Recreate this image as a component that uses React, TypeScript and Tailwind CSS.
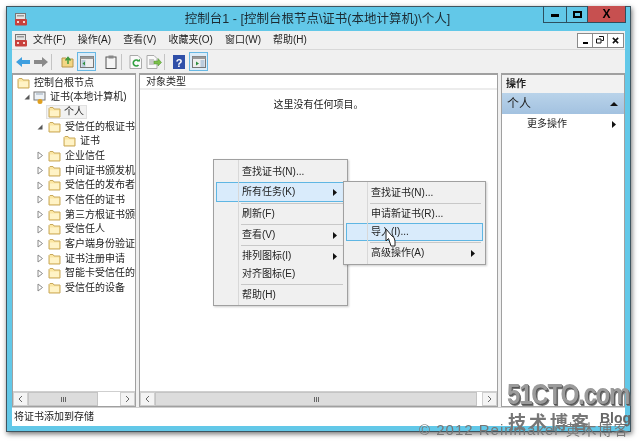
import React from 'react'

const cjk = '[font-family:"Liberation_Sans","Noto_Sans_CJK_SC",sans-serif]'

function Folder({ className = '' }: { className?: string }) {
  return (
    <svg viewBox="0 0 13 12" className={`w-[13px] h-[12px] shrink-0 ${className}`}>
      <path d="M1 2.5 L1 11 L12 11 L12 3 L6 3 L5 1.5 L2 1.5 Z" fill="#fbe6a2" stroke="#c9a95c" strokeWidth="1" />
      <path d="M2 4.5 H11 V10 H2 Z" fill="#fff3c6" />
    </svg>
  )
}

function Expander({ open }: { open?: boolean }) {
  return open ? (
    <svg viewBox="0 0 8 8" className="w-[8px] h-[8px] shrink-0">
      <path d="M6.5 1.5 V6.5 H1.5 Z" fill="#595959" />
    </svg>
  ) : (
    <svg viewBox="0 0 8 8" className="w-[8px] h-[9px] shrink-0">
      <path d="M2 .5 L6.5 4 L2 7.5 Z" fill="#fff" stroke="#8a8a8a" />
    </svg>
  )
}

function MenuArrow() {
  return (
    <svg viewBox="0 0 4 7" className="w-[4px] h-[7px] shrink-0">
      <path d="M0 0 L4 3.5 L0 7 Z" fill="#111" />
    </svg>
  )
}

const treeRows = [
  { label: '个人', pad: 'pl-[33px]', selected: true },
  { label: '受信任的根证书颁发机构', pad: 'pl-[23px]', open: true, arrow: true },
  { label: '证书', pad: 'pl-[50px]' },
  { label: '企业信任', pad: 'pl-[23px]', arrow: true },
  { label: '中间证书颁发机构', pad: 'pl-[23px]', arrow: true },
  { label: '受信任的发布者', pad: 'pl-[23px]', arrow: true },
  { label: '不信任的证书', pad: 'pl-[23px]', arrow: true },
  { label: '第三方根证书颁发机构', pad: 'pl-[23px]', arrow: true },
  { label: '受信任人', pad: 'pl-[23px]', arrow: true },
  { label: '客户端身份验证颁发者', pad: 'pl-[23px]', arrow: true },
  { label: '证书注册申请', pad: 'pl-[23px]', arrow: true },
  { label: '智能卡受信任的根', pad: 'pl-[23px]', arrow: true },
  { label: '受信任的设备', pad: 'pl-[23px]', arrow: true },
]

const menuNames = ['文件(F)', '操作(A)', '查看(V)', '收藏夹(O)', '窗口(W)', '帮助(H)']

function AppIcon() {
  return (
    <svg viewBox="0 0 14 14" className="w-[14px] h-[14px] shrink-0">
      <rect x="1.5" y="1.5" width="10" height="6" fill="#e4e4e4" stroke="#777" />
      <rect x="3" y="3" width="7" height="1.5" fill="#999" />
      <rect x="1" y="7" width="12" height="6.5" rx="1" fill="#c8403c" />
      <rect x="3" y="9" width="2" height="2" fill="#f5d5d0" />
      <rect x="9" y="9" width="2" height="2" fill="#f5d5d0" />
    </svg>
  )
}

function Scrollbar({ thumb }: { thumb: string }) {
  return (
    <div className="h-[15px] flex items-center bg-[#f0f0f0] border-t border-[#cfcfcf] shrink-0 text-[#555]">
      <div className="w-[15px] h-full flex items-center justify-center bg-[#f4f4f4] border border-[#cfcfcf]">
        <svg viewBox="0 0 5 8" className="w-[5px] h-[8px]"><path d="M4 1 L1 4 L4 7" fill="none" stroke="#666" /></svg>
      </div>
      <div className="flex-1 h-full flex bg-white">
        <div className={`${thumb} h-full bg-[#dcdcdc] border border-[#c4c4c4] flex items-center justify-center`}>
          <div className="flex gap-[1px]">
            <div className="w-[1px] h-[5px] bg-[#666]" />
            <div className="w-[1px] h-[5px] bg-[#666]" />
            <div className="w-[1px] h-[5px] bg-[#666]" />
          </div>
        </div>
      </div>
      <div className="w-[15px] h-full flex items-center justify-center bg-[#f4f4f4] border border-[#cfcfcf]">
        <svg viewBox="0 0 5 8" className="w-[5px] h-[8px]"><path d="M1 1 L4 4 L1 7" fill="none" stroke="#666" /></svg>
      </div>
    </div>
  )
}

function Sep({ left }: { left: string }) {
  return <div className={`h-[1px] bg-[#c8c8c8] ${left} mr-[2px] my-[1px]`} />
}

function MenuItem({ label, arrow, hot, height = 'h-[18px]', text = 'pl-[25px]' }: { label: string; arrow?: boolean; hot?: boolean; height?: string; text?: string }) {
  return (
    <div className={`${height} ${text} pr-[7px] flex items-center justify-between border ${hot ? 'bg-[#d9ebfb] border-[#5fb6e3]' : 'border-transparent'}`}>
      <span>{label}</span>
      {arrow && <MenuArrow />}
    </div>
  )
}

export default function App() {
  return (
    <div className={`w-[640px] h-[442px] bg-white pl-[6px] pt-[6px] relative overflow-hidden text-[10px] leading-none text-[#222] blur-[0.35px] ${cjk}`}>
      <div className="w-[625px] h-[426px] bg-[#62c8e8] border border-[#3f5560] shadow-[1px_2px_5px_rgba(0,0,0,0.55)] flex flex-col">
        {/* title bar */}
        <div className="h-[24px] flex items-start shrink-0 pl-[7px]">
          <div className="mt-[5px]"><AppIcon /></div>
          <div className="flex-1 text-center text-[12.5px] text-[#1c2b33] pt-[6px] pl-[64px] whitespace-nowrap">控制台1 - [控制台根节点\证书(本地计算机)\个人]</div>
          <div className="flex h-[17px] mr-[4px] -mt-[1px] border border-[#2d4f5f] border-t-0">
            <div className="w-[23px] flex items-center justify-center border-r border-[#2d4f5f]"><div className="w-[8px] h-[3px] bg-black mt-[3px]" /></div>
            <div className="w-[21px] flex items-center justify-center border-r border-[#2d4f5f]"><div className="w-[9px] h-[7px] border-2 border-black" /></div>
            <div className="w-[37px] flex items-center justify-center bg-[#c75050] text-[12px] font-bold text-black">X</div>
          </div>
        </div>

        <div className="flex-1 min-h-0 mx-[5px] flex flex-col bg-[#f0f0f0]">
          {/* menu bar */}
          <div className="h-[19px] flex items-center shrink-0 border-b border-[#d8d8d8] pl-[2px] pr-[1px]">
            <AppIcon />
            <div className="flex gap-[12px] ml-[5px] flex-1">
              {menuNames.map((name) => <span key={name}>{name}</span>)}
            </div>
            <div className="flex h-[15px] border border-[#8a8a8a] bg-white font-bold">
              <div className="w-[15px] flex items-end justify-center pb-[3px] border-r border-[#8a8a8a]"><div className="w-[5px] h-[2px] bg-black" /></div>
              <div className="w-[15px] flex items-center justify-center border-r border-[#8a8a8a]">
                <svg viewBox="0 0 8 8" className="w-[8px] h-[8px]"><path d="M3 .5 H7.5 V4.5 H5.5 M.5 3 H5 V7 H.5 Z" fill="none" stroke="#111" /></svg>
              </div>
              <div className="w-[15px] flex items-center justify-center">
                <svg viewBox="0 0 8 8" className="w-[7px] h-[7px]"><path d="M1 1 L7 7 M7 1 L1 7" stroke="#111" strokeWidth="1.8" /></svg>
              </div>
            </div>
          </div>

          {/* toolbar */}
          <div className="h-[23px] flex items-center shrink-0 pl-[4px]">
            <svg viewBox="0 0 14 12" className="w-[14px] h-[12px]"><path d="M0 6 L6 1 V4 H14 V8 H6 V11 Z" fill="#3f9fdf" /></svg>
            <svg viewBox="0 0 14 12" className="w-[14px] h-[12px] ml-[4px]"><path d="M14 6 L8 1 V4 H0 V8 H8 V11 Z" fill="#8a8a8a" /></svg>
            <div className="w-[1px] h-[16px] bg-[#c4c4c4] ml-[3px]" />
            <svg viewBox="0 0 13 13" className="w-[13px] h-[13px] ml-[9px]">
              <path d="M1 3 H5 L6 4 H12 V12 H1 Z" fill="#f3d684" stroke="#b8964a" />
              <path d="M7 9 V4 M4.5 5.5 L7 2.5 L9.5 5.5" fill="none" stroke="#3d9a3d" strokeWidth="1.5" />
            </svg>
            <div className="w-[19px] h-[19px] ml-[3px] bg-[#dcecf8] border border-[#68b8e4] flex items-center justify-center">
              <svg viewBox="0 0 14 12" className="w-[14px] h-[12px]"><rect x=".5" y=".5" width="13" height="11" fill="#eee" stroke="#777" /><rect x=".5" y=".5" width="13" height="2.5" fill="#999" /><rect x="1.5" y="4" width="4" height="7" fill="#bcd" /><path d="M5 5.5 L2.5 7.5 L5 9.5Z" fill="#2f8f3f" /></svg>
            </div>
            <svg viewBox="0 0 12 14" className="w-[12px] h-[14px] ml-[9px]"><rect x="1" y="2" width="10" height="11.5" fill="#f5f5f5" stroke="#555" /><rect x="3.5" y=".5" width="5" height="3" fill="#888" /></svg>
            <div className="w-[1px] h-[16px] bg-[#c4c4c4] ml-[4px]" />
            <svg viewBox="0 0 13 14" className="w-[13px] h-[14px] ml-[7px]"><path d="M1 .5 H9 L12.5 4 V13.5 H1 Z" fill="#fafafa" stroke="#aaa" /><path d="M9.5 6 A3 3 0 1 0 9.5 10" fill="none" stroke="#2f9f3f" strokeWidth="1.6" /><path d="M8 6.5 H11 V3.8 Z" fill="#2f9f3f" /></svg>
            <svg viewBox="0 0 16 14" className="w-[16px] h-[14px] ml-[4px]"><path d="M1 .5 H8 L11 3.5 V13.5 H1 Z" fill="#fafafa" stroke="#aaa" /><path d="M3 5 H8 M3 7 H8 M3 9 H8" stroke="#999" /><path d="M8 6 H12 V3.5 L15.5 7.5 L12 11 V9 H8 Z" fill="#7cc04a" stroke="#4d9030" strokeWidth=".5" /></svg>
            <div className="w-[1px] h-[16px] bg-[#c4c4c4] ml-[2px]" />
            <svg viewBox="0 0 12 14" className="w-[12px] h-[14px] ml-[8px]"><rect width="12" height="14" fill="#2f4fa8" /><text x="6" y="11.5" textAnchor="middle" fontSize="11" fontWeight="700" fill="#fff">?</text></svg>
            <div className="w-[19px] h-[19px] ml-[4px] bg-[#dcecf8] border border-[#68b8e4] flex items-center justify-center">
              <svg viewBox="0 0 14 12" className="w-[14px] h-[12px]"><rect x=".5" y=".5" width="13" height="11" fill="#eee" stroke="#777" /><rect x=".5" y=".5" width="13" height="2.5" fill="#999" /><rect x="8.5" y="4" width="4" height="7" fill="#bcd" /><path d="M4 5.5 L7 7.5 L4 9.5Z" fill="#2f8f3f" /></svg>
            </div>
          </div>

          {/* panes */}
          <div className="flex-1 min-h-0 flex gap-[3px]">
            <div className="w-[124px] bg-white border border-[#a0a0a0] border-t-2 flex flex-col overflow-hidden">
              <div className="flex-1 min-h-0 overflow-hidden whitespace-nowrap">
                <div className="h-[15px] flex items-center pl-[4px] gap-[4px]"><Folder /><span>控制台根节点</span></div>
                <div className="h-[14.67px] flex items-center pl-[10px]">
                  <Expander open />
                  <svg viewBox="0 0 13 13" className="w-[13px] h-[13px] ml-[2px] shrink-0"><rect x="1" y="1" width="11" height="8" fill="#eef2f6" stroke="#777" /><path d="M3 3 H10" stroke="#9ab" /><circle cx="7" cy="10.5" r="2.5" fill="#e0a020" /></svg>
                  <span className="ml-[4px]">证书(本地计算机)</span>
                </div>
                {treeRows.map((row) => (
                  <div key={row.label} className={`h-[14.67px] flex items-center ${row.pad}`}>
                    {row.arrow && <div className="w-[12px] flex shrink-0"><Expander open={row.open} /></div>}
                    <div className={row.selected ? 'flex items-center h-[14px] gap-[3px] pl-[1px] pr-[2px] bg-[#f2f2f2] border border-[#e0e0e0]' : 'flex items-center gap-[4px]'}>
                      <Folder />
                      <span>{row.label}</span>
                    </div>
                  </div>
                ))}
              </div>
              <Scrollbar thumb="w-[70px]" />
            </div>

            <div className="w-[359px] bg-white border border-[#a0a0a0] border-t-2 flex flex-col">
              <div className="h-[15px] flex items-center pl-[6px] border-b-2 border-[#ececec] shrink-0">对象类型</div>
              <div className="flex-1 min-h-0 text-center pt-[10px]">这里没有任何项目。</div>
              <Scrollbar thumb="w-[322px]" />
            </div>

            <div className="flex-1 bg-white border border-[#a0a0a0] border-t-2 flex flex-col">
              <div className="h-[18px] flex items-center pl-[4px] bg-[#f2f2f2] font-bold shrink-0">操作</div>
              <div className="h-[21px] flex items-center justify-between pl-[5px] pr-[6px] bg-gradient-to-b from-[#b9d3ea] to-[#a3c2e0] text-[12px] shrink-0">
                <span>个人</span>
                <svg viewBox="0 0 8 4" className="w-[8px] h-[4px]"><path d="M0 4 L4 0 L8 4 Z" fill="#111" /></svg>
              </div>
              <div className="h-[18px] mt-[1px] flex items-center justify-between pl-[25px] pr-[8px]">
                <span>更多操作</span>
                <MenuArrow />
              </div>
            </div>
          </div>

          {/* status bar */}
          <div className="h-[19px] flex items-center pl-[2px] shrink-0 bg-white border-t border-[#d0d0d0]">将证书添加到存储</div>
        </div>
        <div className="h-[5px] shrink-0" />
      </div>

      {/* context menus */}
      <div className="absolute left-[213px] top-[159px] w-[135px] h-[147px] bg-[#f0f0f0] border border-[#a0a0a0] shadow-[1px_1px_2px_rgba(0,0,0,0.2)] pt-[2px] px-[2px]">
        <div className="absolute left-[24px] top-0 bottom-0 w-[1px] bg-[#d8d8d8]" />
        <MenuItem label="查找证书(N)..." height="h-[20px]" />
        <MenuItem label="所有任务(K)" arrow hot height="h-[20px]" />
        <Sep left="ml-[25px]" />
        <MenuItem label="刷新(F)" />
        <Sep left="ml-[25px]" />
        <MenuItem label="查看(V)" arrow />
        <Sep left="ml-[25px]" />
        <MenuItem label="排列图标(I)" arrow />
        <MenuItem label="对齐图标(E)" />
        <Sep left="ml-[25px]" />
        <MenuItem label="帮助(H)" />
      </div>
      <div className="absolute left-[343px] top-[181px] w-[143px] h-[84px] bg-[#f0f0f0] border border-[#a0a0a0] shadow-[1px_1px_2px_rgba(0,0,0,0.2)] pt-[2px] px-[2px]">
        <div className="absolute left-[23px] top-0 bottom-0 w-[1px] bg-[#d8d8d8]" />
        <MenuItem label="查找证书(N)..." text="pl-[24px]" />
        <Sep left="ml-[24px]" />
        <MenuItem label="申请新证书(R)..." text="pl-[24px]" />
        <MenuItem label="导入(I)..." hot text="pl-[24px]" />
        <Sep left="ml-[24px]" />
        <MenuItem label="高级操作(A)" arrow text="pl-[24px]" />
      </div>

      {/* mouse pointer */}
      <svg viewBox="0 0 11 19" className="absolute left-[385px] top-[228px] w-[11px] h-[19px]">
        <path d="M1 1 L1 13 L3.5 10.5 L5 15 L6 18 L10 18 L10 13 L9 9.5 L7 8 Z" fill="#fff" stroke="#222" strokeWidth="1" />
      </svg>

      {/* watermark */}
      <div className="absolute left-[507px] top-[379px] origin-left scale-x-[0.8] text-[30px] font-bold tracking-[-1.5px] text-[#9b9b9b] [text-shadow:1px_1px_0_#555,2px_2px_0_#777] whitespace-nowrap">51CTO.com</div>
      <div className="absolute left-[419px] top-[422px] text-[15px] text-[#777] tracking-[1px] whitespace-nowrap">© 2012 Reinmaker 黄木博客</div>
      <div className="absolute left-[508px] top-[414px] text-[18px] font-bold text-[#777] tracking-[3px] whitespace-nowrap">技术博客</div>
      <div className="absolute left-[600px] top-[411px] text-[14px] font-bold text-[#666] whitespace-nowrap">Blog</div>
    </div>
  )
}
